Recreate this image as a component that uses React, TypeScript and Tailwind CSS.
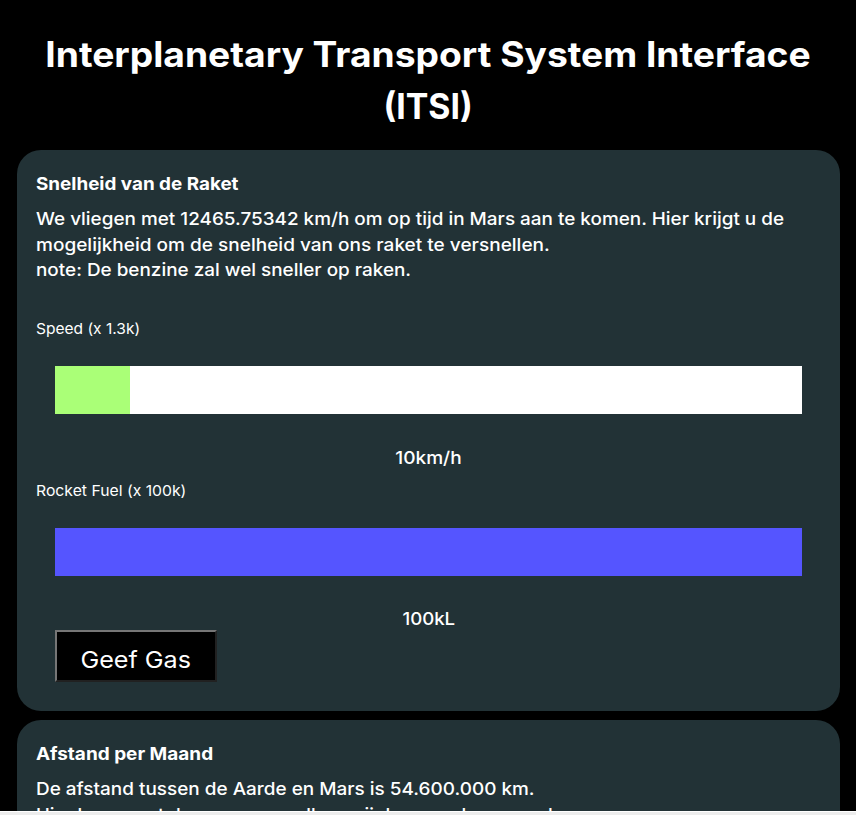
const ff = "font-['Inter','Liberation_Sans',sans-serif]";

type LineProps = { text: string; className: string };

function Line({ text, className }: LineProps) {
  return (
    <div>
      <span className={`inline-block whitespace-nowrap ${className}`}>{text}</span>
    </div>
  );
}

export default function App() {
  return (
    <div className={`flex h-[815px] w-[856px] flex-col overflow-hidden bg-black text-white ${ff}`}>
      <div className="h-[811px] overflow-hidden px-[17px] pt-[28px]">
        <h1 className="h-[122px] text-center text-[35px] font-bold leading-[52px]">
          <Line text="Interplanetary Transport System Interface" className="scale-x-[1.063]" />
          <Line text="(ITSI)" className="scale-x-[0.967]" />
        </h1>
        <section className="h-[561px] w-[823px] rounded-[24px] bg-[#223236] px-[19px] pt-[21px]">
          <h2 className="h-[35px] text-[17.5px] font-bold leading-[26px]">
            <Line text="Snelheid van de Raket" className="origin-left scale-x-[1.077]" />
          </h2>
          <div className="h-[102px] text-[17.5px] font-medium leading-[25.6px]">
            <Line text="We vliegen met 12465.75342 km/h om op tijd in Mars aan te komen. Hier krijgt u de" className="origin-left scale-x-[1.08]" />
            <Line text="mogelijkheid om de snelheid van ons raket te versnellen." className="origin-left scale-x-[1.087]" />
            <Line text="note: De benzine zal wel sneller op raken." className="origin-left scale-x-[1.08]" />
          </div>
          <div className="h-[58px] pt-[9px] text-[15px] leading-[24px]">
            <Line text="Speed (x 1.3k)" className="origin-left scale-x-[1.035]" />
          </div>
          <div className="mx-[19px] flex h-[48px] w-[747px] bg-white">
            <div className="w-[75px] bg-[#aaff77]" />
          </div>
          <div className="mt-[31px] h-[34px] text-center text-[17.5px] font-medium leading-[26px]">
            <Line text="10km/h" className="scale-x-[1.09]" />
          </div>
          <div className="h-[49px] text-[15px] leading-[24px]">
            <Line text="Rocket Fuel (x 100k)" className="origin-left scale-x-[1.05]" />
          </div>
          <div className="mx-[19px] h-[48px] w-[747px] bg-[#5555ff]" />
          <div className="mt-[30px] h-[24px] text-center text-[17.5px] font-medium leading-[26px]">
            <Line text="100kL" className="scale-x-[1.065]" />
          </div>
          <button className="ml-[19px] block h-[52px] w-[162px] border-2 border-t-[#767676] border-l-[#767676] border-r-[#212121] border-b-[#212121] bg-black pt-[8px] text-[23.5px] leading-[36px]">
            <Line text="Geef Gas" className="scale-x-[1.07]" />
          </button>
        </section>
        <section className="mt-[9px] h-[300px] w-[823px] rounded-[24px] bg-[#223236] px-[19px] pt-[21px]">
          <h2 className="h-[35px] text-[17.5px] font-bold leading-[26px]">
            <Line text="Afstand per Maand" className="origin-left scale-x-[1.084]" />
          </h2>
          <div className="text-[17.5px] font-medium leading-[25.6px]">
            <Line text="De afstand tussen de Aarde en Mars is 54.600.000 km." className="origin-left scale-x-[1.082]" />
            <Line text="Hier kan u met de nu meer snellere wij de maanden even doen." className="origin-left scale-x-[1.06]" />
          </div>
        </section>
      </div>
      <div className="h-[4px] border-t border-white bg-[#ededed]" />
    </div>
  );
}
